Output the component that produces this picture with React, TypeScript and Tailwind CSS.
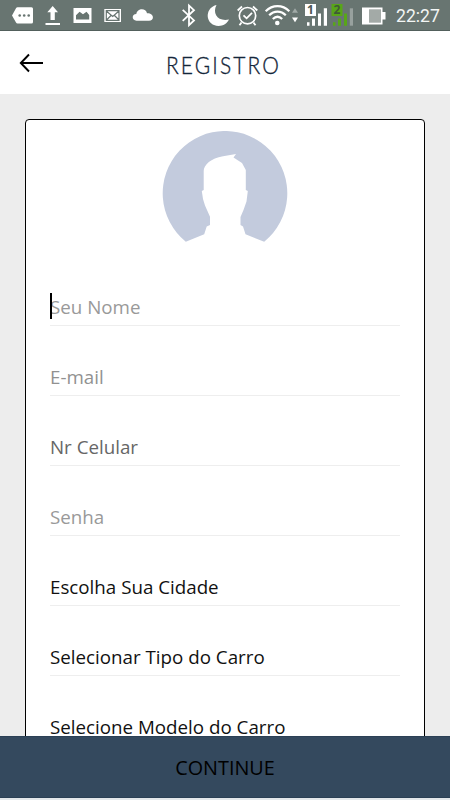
const fields = [
  { label: 'Seu Nome', color: 'text-[#999999]', active: true },
  { label: 'E-mail', color: 'text-[#919191]' },
  { label: 'Nr Celular', color: 'text-[#666666]' },
  { label: 'Senha', color: 'text-[#999999]' },
  { label: 'Escolha Sua Cidade', color: 'text-[#111111]' },
  { label: 'Selecionar Tipo do Carro', color: 'text-[#111111]' },
  { label: 'Selecione Modelo do Carro', color: 'text-[#111111]' },
];

const Notifications = () => {
  return (
    <div className="flex gap-[11px] pl-3">
      <svg width="21" height="30" viewBox="12 0 21 30" fill="#fff">
        <path d="M17.5 7.3H31.5Q33 7.3 33 8.8V22Q33 23.5 31.5 23.5H17.5Q16.5 23.5 16 22.6L12 15.5L16 8.2Q16.5 7.3 17.5 7.3Z" />
        <g fill="#687571">
          <circle cx="19.7" cy="15.5" r="1.3" />
          <circle cx="24.2" cy="15.5" r="1.3" />
          <circle cx="28.7" cy="15.5" r="1.3" />
        </g>
      </svg>
      <svg width="17" height="30" viewBox="44 0 17 30" fill="#fff">
        <path d="M52.7 6L58 12.3H54.8V20H50.5V12.3H47.3ZM45.5 23H60V25H45.5Z" />
      </svg>
      <svg width="20" height="30" viewBox="72 0 20 30" fill="#fff">
        <path
          fillRule="evenodd"
          d="M73.5 8H91.5V23H73.5ZM76 19.5H89.2V15L86.5 11.8L83 14.3L79.6 11.8L76 15.3Z"
        />
      </svg>
      <svg width="18" height="30" viewBox="103 0 18 30">
        <path d="M104.3 9H121V22H104.3Z" fill="#fff" />
        <path
          d="M106.3 11L112.7 16.5L119 11M106.5 20L111 15.5M119 20L114.5 15.5M106.3 10.7H119V20.3H106.3Z"
          stroke="#687571"
          strokeWidth="1.2"
          fill="none"
        />
      </svg>
      <svg width="21" height="30" viewBox="132 0 21 30" fill="#fff">
        <path d="M136.5 20.7C131.5 20.7 131.5 14 136.3 14C137 7.8 146.2 7.5 147 13.3C154.5 13.2 154.5 20.7 149 20.7Z" />
      </svg>
    </div>
  );
};

const SystemIcons = () => {
  return (
    <div className="flex">
      <svg width="24" height="30" viewBox="180 0 24 30" fill="none">
        <path
          d="M182.7 9.8L194 20.4L189 25.2V5.5L194 10.2L182.7 20.8"
          stroke="#fff"
          strokeWidth="1.8"
        />
      </svg>
      <svg width="30" height="30" viewBox="204 0 30 30">
        <path
          d="M216.5 5C206 7.5 204.7 21 214 25C220 27.7 226.8 24.5 229 19.5C218 22 212 13.5 216.5 5Z"
          fill="#fff"
        />
      </svg>
      <svg width="28" height="30" viewBox="234 0 28 30" fill="none" stroke="#fff">
        <circle cx="247.5" cy="15.7" r="8.2" strokeWidth="1.7" />
        <path
          d="M237.7 10.5L242 6.5M253 6.5L257.3 10.5M241.5 22.5L239.5 25.3M253.5 22.5L255.5 25.3M243.5 15.3L246.6 18.3L252 12.8"
          strokeWidth="1.8"
        />
      </svg>
      <svg width="40" height="30" viewBox="262 0 40 30" fill="none">
        <g stroke="#fff" strokeWidth="2.2">
          <path d="M265.7 11.2C272.5 4.4 282.5 4.4 289.3 11.2" />
          <path d="M269.2 15.2C274 10.3 281 10.3 285.8 15.2" />
          <path d="M272.8 19C275.8 16.1 279.2 16.1 282.2 19" />
        </g>
        <circle cx="277.3" cy="23" r="2.3" fill="#fff" />
        <path d="M295 8.3L298 12.7H292Z" fill="#a1aaa7" />
        <path d="M292 17.5H298L295 22.3Z" fill="#fff" />
      </svg>
      <div className="relative">
        <svg width="27" height="30" viewBox="302 0 27 30" fill="#fff">
          <path d="M305 4H316V16H305ZM307 22.3H309.5V25.7H307ZM312 18.5H315V25.7H312ZM318 13.5H321V25.7H318ZM323.8 8.3H327V25.7H323.8Z" />
        </svg>
        <span className="absolute left-[3px] top-[4px] w-[11px] text-center text-[12px] leading-[12px] font-bold text-[#4e5955]">
          1
        </span>
      </div>
      <div className="relative">
        <svg width="31" height="30" viewBox="329 0 31 30" fill="#58a618">
          <path d="M331.5 4H342.5V16H331.5ZM333 22.3H335.5V25.7H333ZM338 18.5H341V25.7H338ZM344 13.5H347V25.7H344Z" />
          <path d="M349.8 8.3H353V25.7H349.8Z" fill="#98a19e" />
        </svg>
        <span className="absolute left-[3px] top-[4px] w-[10px] text-center text-[12px] leading-[12px] font-bold text-[#3f5b36]">
          2
        </span>
      </div>
      <svg width="36" height="30" viewBox="360 0 36 30">
        <path d="M362 7.5H382.5V12H385.5V19.5H382.5V24.5H362Z" fill="#fff" />
        <path d="M369 9.3H381V22.7H369Z" fill="#a3aaa7" />
      </svg>
      <div className="w-[54px] font-[Roboto,sans-serif] text-[17.6px] leading-[33px] text-[#f3f6f5]">
        22:27
      </div>
    </div>
  );
};

const Avatar = () => {
  return (
    <svg className="mx-auto" width="126" height="112" viewBox="162 131 126 112">
      <path
        d="M185.8 241.7A62.3 62.3 0 1 1 264.2 241.7L245.5 234.3L243 226.5L240.5 225V217L243.5 210L246.5 201.5L247.8 191L245.8 190V170L242 163L233.5 157.5L236 154L223 156.2C211 158 203.7 165 203.7 171V190L201.8 191L203 199L205 205.5L210 216.7V225L206.7 226.5L204.2 234.3Z"
        fill="#c3cbdd"
      />
    </svg>
  );
};

const App = () => {
  return (
    <div className="flex h-[800px] w-[450px] flex-col overflow-hidden bg-[#ededed] font-['Open_Sans',sans-serif]">
      <div className="flex h-[31px] shrink-0 justify-between border-b border-[#52605c] bg-[#687571]">
        <Notifications />
        <SystemIcons />
      </div>
      <div className="grid h-[63px] shrink-0 grid-cols-[1fr_auto_1fr] items-center bg-white">
        <svg
          className="ml-[19px]"
          width="25"
          height="20"
          viewBox="0 0 25 20"
          fill="none"
          stroke="#000"
          strokeWidth="1.9"
        >
          <path d="M10 1.5L1.8 10L10 18.5M1.8 10H24" />
        </svg>
        <div className="origin-center scale-y-[1.08] pt-[5px] pr-[3px] font-[Lato,sans-serif] text-[21px] font-light tracking-[2.1px] text-[#14263a] [-webkit-text-stroke:0.3px_#14263a]">
          REGISTRO
        </div>
      </div>
      <div className="min-h-0 flex-1 overflow-hidden px-[25px] pt-[25px]">
        <div className="h-[700px] rounded-[4px] border border-black bg-white px-6 pt-[11px]">
          <Avatar />
          <div className="pt-[42px]">
            {fields.map((item) => {
              return (
                <div
                  className="mb-[29px] flex h-[41px] items-start border-b border-[#eeeeee]"
                  key={item.label}
                >
                  <div className="relative">
                    {item.active && (
                      <div className="absolute left-0 top-[8px] h-[26px] w-[2px] bg-black" />
                    )}
                    <div
                      className={`pt-[9px] text-[18.75px] leading-[26px] whitespace-nowrap ${item.color}`}
                    >
                      {item.label}
                    </div>
                  </div>
                </div>
              );
            })}
          </div>
        </div>
      </div>
      <div className="flex h-[62px] shrink-0 items-center justify-center border-y border-[#2b4055] bg-[#34495e] pt-[2px] text-[19.8px] text-black">
        CONTINUE
      </div>
      <div className="h-[2px] shrink-0 bg-[#e4e8eb]" />
    </div>
  );
};
export default App;
